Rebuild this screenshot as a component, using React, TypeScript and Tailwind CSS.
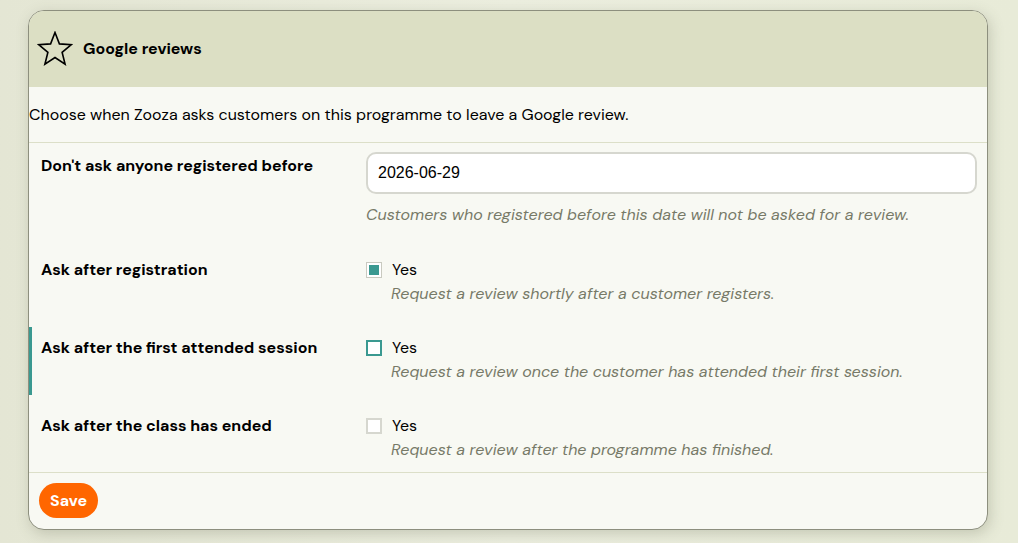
import React, { useState } from 'react';

interface Option {
  id: string;
  label: string;
  help: string;
  checked: boolean;
}

const options: Option[] = [
  { id: 'registration', label: 'Ask after registration', help: 'Request a review shortly after a customer registers.', checked: true },
  { id: 'first', label: 'Ask after the first attended session', help: 'Request a review once the customer has attended their first session.', checked: false },
  { id: 'ended', label: 'Ask after the class has ended', help: 'Request a review after the programme has finished.', checked: false },
];

const StarIcon: React.FC = () => (
  <svg width="36" height="36" viewBox="0 0 36 36" fill="none">
    <polygon
      points="18,1.5 22.4,12.9 34.3,13.7 25.1,21.3 28.1,33.2 18,26.5 7.9,33.2 10.9,21.3 1.7,13.7 13.6,12.9"
      stroke="#000"
      strokeWidth="1.6"
      strokeLinejoin="miter"
    />
  </svg>
);

const Checkbox: React.FC<{ checked: boolean; focused: boolean; onClick: () => void }> = ({ checked, focused, onClick }) => {
  if (checked) {
    return (
      <button onClick={onClick} className="w-4 h-4 border border-[#c9cac0] bg-white p-[2px] shrink-0">
        <span className="block w-full h-full bg-[#3a9990]" />
      </button>
    );
  }
  return (
    <button
      onClick={onClick}
      className={`w-4 h-4 border-2 bg-white shrink-0 ${focused ? 'border-[#3a9990]' : 'border-[#d6d7cf]'}`}
    />
  );
};

const App: React.FC = () => {
  const [values, setValues] = useState<Record<string, boolean>>(
    Object.fromEntries(options.map(o => [o.id, o.checked]))
  );
  const [date, setDate] = useState('2026-06-29');
  const focusedId = 'first';

  return (
    <div className="min-h-[543px] w-full bg-gradient-to-r from-[#e4e6d4] via-[#eceedf] to-[#e8ebd8] pt-[10px] pl-[28px] pr-[30px] font-['DM_Sans','Lato',sans-serif] text-black">
      <div className="w-[960px] rounded-2xl border border-[#8d8f7e] bg-[#f8f9f3] overflow-hidden shadow-[2px_4px_14px_rgba(90,95,70,0.25)]">
        {/* Header */}
        <div className="h-[76px] bg-[#dcdfc4] flex items-center gap-[10px] pl-[8px]">
          <StarIcon />
          <h2 className="text-[16px] font-bold">Google reviews</h2>
        </div>

        {/* Intro */}
        <div className="h-[56px] flex items-center border-b border-[#dcdfc8]">
          <p className="text-[16px]">Choose when Zooza asks customers on this programme to leave a Google review.</p>
        </div>

        {/* Rows */}
        <div className="flex flex-col gap-[10px] border-b border-[#dcdfc8]">
          <div className="grid grid-cols-[325px_1fr] pl-[9px] pr-[10px] pt-[9px] pb-[12px] border-l-[3px] border-transparent">
            <label className="text-[16px] font-bold leading-6 pt-[2px]">Don't ask anyone registered before</label>
            <div className="flex flex-col">
              <input
                type="text"
                value={date}
                onChange={e => setDate(e.target.value)}
                className="h-[42px] w-full rounded-[10px] border-2 border-[#d6d7cf] bg-white px-[10px] text-[16px] font-['Liberation_Sans',Arial,sans-serif] outline-none"
              />
              <p className="mt-[9px] text-[16px] italic text-[#777a68] leading-6">
                Customers who registered before this date will not be asked for a review.
              </p>
            </div>
          </div>

          {options.map((o, i) => (
            <div
              key={o.id}
              className={`grid grid-cols-[325px_1fr] pl-[9px] pr-[10px] pt-[9px] border-l-[3px] ${
                i === options.length - 1 ? 'pb-[10px]' : 'pb-[11px]'
              } ${o.id === focusedId ? 'border-[#3a9990]' : 'border-transparent'}`}
            >
              <label className="text-[16px] font-bold leading-6">{o.label}</label>
              <div className="flex flex-col">
                <div className="flex items-center gap-[10px] h-6">
                  <Checkbox
                    checked={values[o.id]}
                    focused={o.id === focusedId}
                    onClick={() => setValues(v => ({ ...v, [o.id]: !v[o.id] }))}
                  />
                  <span className="text-[16px]">Yes</span>
                </div>
                <p className="pl-[25px] text-[16px] italic text-[#777a68] leading-6">{o.help}</p>
              </div>
            </div>
          ))}
        </div>

        {/* Footer */}
        <div className="px-[10px] pt-[10px] pb-[11px]">
          <button className="h-[35px] px-[11px] rounded-full bg-[#ff6600] text-white text-[16px] font-bold">
            Save
          </button>
        </div>
      </div>
    </div>
  );
};

export default App;
